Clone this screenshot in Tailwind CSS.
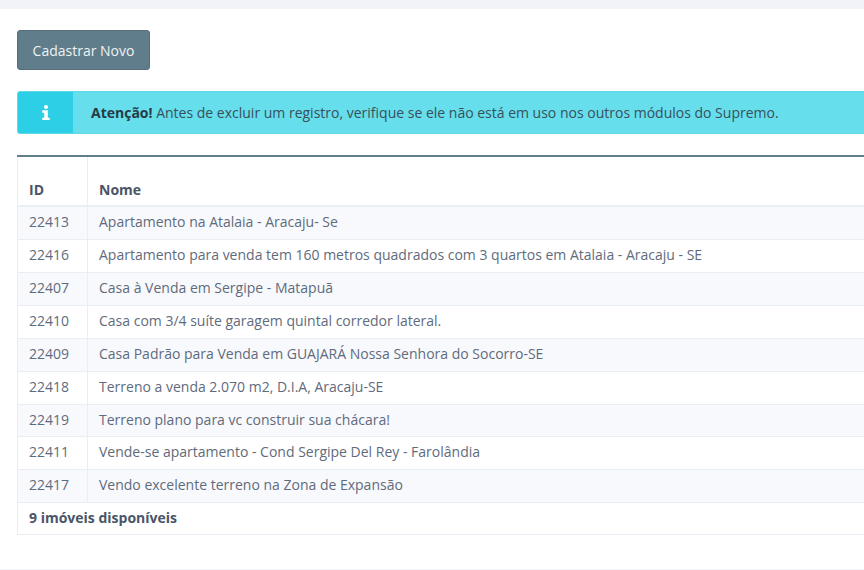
<!DOCTYPE html>
<html lang="pt-BR">
<head>
    <meta charset="UTF-8">
    <title>Imóveis</title>
    <script src="https://cdn.jsdelivr.net/npm/@tailwindcss/browser@4"></script>
</head>
<body class="bg-[#f2f3f8] h-[570px] overflow-hidden font-['Open_Sans',sans-serif] text-[14px] text-[#5f6b7c]">
    <div class="mt-[9px] w-[900px] h-[560px] bg-white pl-[17px] pt-[21px]">
        <button class="block h-[40px] w-[133px] rounded-[3px] border border-[#566e7a] bg-[#607d8b] text-[14px] text-[#eef2f3]">Cadastrar Novo</button>

        <!-- aviso -->
        <div class="mt-[21px] flex h-[43px] w-[870px] rounded-[3px] border border-[#5fd8e8] bg-[#67deeb] text-[#37505c]">
            <div class="flex w-[55px] items-center justify-center bg-[#2ccfe6] text-white">
                <svg class="w-[8px] h-[15px]" viewBox="0 0 7 14" fill="#fff"><circle cx="3.5" cy="1.9" r="1.9"/><path d="M0 5h5.2v6.8H7V14H0v-2.2h1.8V7.2H0z"/></svg>
            </div>
            <div class="flex items-center pl-[18px]"><span><b class="font-bold text-[#263b45]">Atenção!</b> Antes de excluir um registro, verifique se ele não está em uso nos outros módulos do Supremo.</span></div>
        </div>

        <table class="mt-[21px] w-[870px] border-collapse border-t-2 border-t-[#607d8b]">
            <thead>
                <tr class="h-[50px] bg-white font-bold text-[#4a5568]">
                    <th class="w-[70px] border-x border-[#e9eef5] border-b-2 pl-[11px] pb-[5px] align-bottom text-left">ID</th>
                    <th class="border-x border-[#e9eef5] border-b-2 pl-[11px] pb-[5px] align-bottom text-left">Nome</th>
                </tr>
            </thead>
            <tbody>
                <tr class="h-[33px] bg-[#f8f9fc]"><td class="border border-[#e9eef5] pl-[11px] pb-[2px]">22413</td><td class="border border-[#e9eef5] pl-[11px] pb-[2px]">Apartamento na Atalaia - Aracaju- Se</td></tr>
                <tr class="h-[33px] bg-white"><td class="border border-[#e9eef5] pl-[11px] pb-[2px]">22416</td><td class="border border-[#e9eef5] pl-[11px] pb-[2px]">Apartamento para venda tem 160 metros quadrados com 3 quartos em Atalaia - Aracaju - SE</td></tr>
                <tr class="h-[33px] bg-[#f8f9fc]"><td class="border border-[#e9eef5] pl-[11px] pb-[2px]">22407</td><td class="border border-[#e9eef5] pl-[11px] pb-[2px]">Casa à Venda em Sergipe - Matapuã</td></tr>
                <tr class="h-[33px] bg-white"><td class="border border-[#e9eef5] pl-[11px] pb-[2px]">22410</td><td class="border border-[#e9eef5] pl-[11px] pb-[2px]">Casa com 3/4 suíte garagem quintal corredor lateral.</td></tr>
                <tr class="h-[33px] bg-[#f8f9fc]"><td class="border border-[#e9eef5] pl-[11px] pb-[2px]">22409</td><td class="border border-[#e9eef5] pl-[11px] pb-[2px]">Casa Padrão para Venda em GUAJARÁ Nossa Senhora do Socorro-SE</td></tr>
                <tr class="h-[33px] bg-white"><td class="border border-[#e9eef5] pl-[11px] pb-[2px]">22418</td><td class="border border-[#e9eef5] pl-[11px] pb-[2px]">Terreno a venda 2.070 m2, D.I.A, Aracaju-SE</td></tr>
                <tr class="h-[32px] bg-[#f8f9fc]"><td class="border border-[#e9eef5] pl-[11px] pb-[2px]">22419</td><td class="border border-[#e9eef5] pl-[11px] pb-[2px]">Terreno plano para vc construir sua chácara!</td></tr>
                <tr class="h-[33px] bg-white"><td class="border border-[#e9eef5] pl-[11px] pb-[2px]">22411</td><td class="border border-[#e9eef5] pl-[11px] pb-[2px]">Vende-se apartamento - Cond Sergipe Del Rey - Farolândia</td></tr>
                <tr class="h-[33px] bg-[#f8f9fc]"><td class="border border-[#e9eef5] pl-[11px] pb-[2px]">22417</td><td class="border border-[#e9eef5] pl-[11px] pb-[2px]">Vendo excelente terreno na Zona de Expansão</td></tr>
            </tbody>
            <tfoot>
                <tr class="h-[32px] bg-white"><td colspan="2" class="border border-[#e9eef5] pl-[11px] pb-[2px] font-bold text-[#4a5568]">9 imóveis disponíveis</td></tr>
            </tfoot>
        </table>
    </div>
</body>
</html>
